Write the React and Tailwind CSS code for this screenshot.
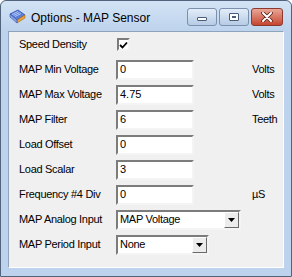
import React from 'react';

const rows = [
    { label: 'MAP Min Voltage', value: '0', unit: 'Volts' },
    { label: 'MAP Max Voltage', value: '4.75', unit: 'Volts' },
    { label: 'MAP Filter', value: '6', unit: 'Teeth' },
    { label: 'Load Offset', value: '0', unit: '' },
    { label: 'Load Scalar', value: '3', unit: '' },
    { label: 'Frequency #4 Div', value: '0', unit: 'µS' },
];

// sunken 3D edge used by the edit boxes and combo boxes
const sunken = 'border-2 border-t-[#7c7c7c] border-l-[#7c7c7c] border-b-[#f4f4f4] border-r-[#f4f4f4] bg-white';

const AppIcon = () => (
    <svg width="17" height="17" viewBox="0 0 17 17">
        <path d="M1 6 L9 2 L16 7 L8 12 Z" fill="#5b7fd6" stroke="#2e4fa8" strokeWidth="0.8" />
        <path d="M3 6.5 L9 3.5 M4.5 7.5 L10.5 4.5 M6 8.5 L12 5.5" stroke="#c9d8ff" strokeWidth="0.8" />
        <path d="M8 12 L16 7 L16 10 L8 15 Z" fill="#e9a23b" stroke="#b06a12" strokeWidth="0.6" />
        <path d="M1 6 L8 12 L8 15 L1 9 Z" fill="#8aa4e6" stroke="#2e4fa8" strokeWidth="0.6" />
    </svg>
);

const Label = ({ children }) => (
    <div className="w-[97px] shrink-0 text-[11px] tracking-[-0.3px] text-black">{children}</div>
);

const Combo = ({ value, width }) => (
    <div className={`${sunken} ${width} h-[20px] flex items-center`}>
        <span className="flex-1 pl-[2px] text-[11px] tracking-[-0.3px] leading-none">{value}</span>
        <div className="w-[15px] h-[16px] flex items-center justify-center bg-[#ececec] border border-t-white border-l-white border-b-[#6a6a6a] border-r-[#6a6a6a]">
            <svg width="7" height="4" viewBox="0 0 7 4"><path d="M0 0 H7 L3.5 4 Z" fill="#000" /></svg>
        </div>
    </div>
);

const App = () => {
    return (
        <div className="w-[292px] h-[277px] bg-[#bdd3ed] border border-[#52647c] rounded-t-[6px] flex flex-col" style={{ fontFamily: '"Liberation Sans", Arial, sans-serif' }}>
            {/* title bar */}
            <div className="h-[30px] shrink-0 flex items-center pl-[8px] pr-[8px] bg-gradient-to-b from-[#d3e3f5] to-[#bdd3ed] rounded-t-[6px]">
                <AppIcon />
                <span className="ml-[5px] pt-[3px] text-[12px] text-black">Options - MAP Sensor</span>
                <div className="ml-auto flex items-start gap-[2px] pt-[1px]">
                    <div className="w-[30px] h-[18px] rounded-[3px] border border-[#7b90ad] bg-gradient-to-b from-[#e3edf8] to-[#b6cbe5] flex items-center justify-center">
                        <div className="w-[10px] h-[4px] mt-[4px] rounded-[1px] border border-[#4a5d78] bg-white" />
                    </div>
                    <div className="w-[30px] h-[18px] rounded-[3px] border border-[#7b90ad] bg-gradient-to-b from-[#e3edf8] to-[#b6cbe5] flex items-center justify-center">
                        <div className="w-[10px] h-[8px] rounded-[1px] border border-[#4a5d78] bg-white flex items-center justify-center">
                            <div className="w-[4px] h-[2px] border border-[#4a5d78]" />
                        </div>
                    </div>
                    <div className="w-[32px] h-[18px] rounded-[3px] border border-[#8c3a2e] bg-gradient-to-b from-[#e9a697] to-[#c4432f] flex items-center justify-center">
                        <svg width="12" height="10" viewBox="0 0 12 10">
                            <path d="M2 1 L10 9 M10 1 L2 9" stroke="#5a2118" strokeWidth="3.6" strokeLinecap="round" />
                            <path d="M2 1 L10 9 M10 1 L2 9" stroke="#fff" strokeWidth="2" strokeLinecap="round" />
                        </svg>
                    </div>
                </div>
            </div>

            {/* client area */}
            <div className="mx-[7px] mb-[8px] flex-1 bg-[#f0f0f0] border border-t-[#8fa3bb] border-l-[#8fa3bb] border-b-white border-r-white flex flex-col pl-[10px]">
                <div className="h-[25px] flex items-center">
                    <Label>Speed Density</Label>
                    <div className={`${sunken} w-[13px] h-[13px] ml-[1px] flex items-center justify-center`}>
                        <svg width="9" height="8" viewBox="0 0 9 8"><path d="M1 4 L3.5 6.5 L8 1.5" stroke="#000" strokeWidth="1.8" fill="none" /></svg>
                    </div>
                </div>
                {rows.map((r) => (
                    <div key={r.label} className="h-[25px] flex items-center">
                        <Label>{r.label}</Label>
                        <div className={`${sunken} w-[78px] h-[20px] flex items-center pl-[2px] text-[11px] leading-none`}>{r.value}</div>
                        <span className="ml-[58px] text-[11px] tracking-[-0.3px]">{r.unit}</span>
                    </div>
                ))}
                <div className="h-[25px] flex items-center">
                    <Label>MAP Analog Input</Label>
                    <Combo value="MAP Voltage" width="w-[125px]" />
                </div>
                <div className="h-[25px] flex items-center">
                    <Label>MAP Period Input</Label>
                    <Combo value="None" width="w-[93px]" />
                </div>
            </div>
        </div>
    );
};

export default App;
